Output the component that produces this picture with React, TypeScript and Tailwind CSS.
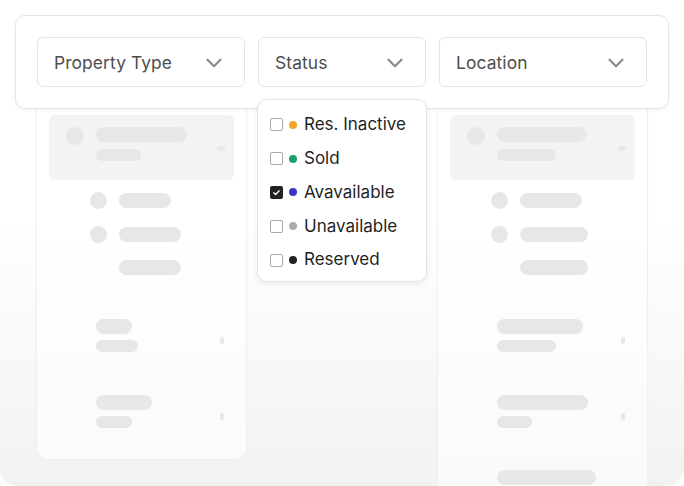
import { ChevronDown } from 'lucide-react'

const font = { fontFamily: 'Inter, "Noto Sans", sans-serif' }

function Select({ label, w }: { label: string; w: string }) {
  return (
    <div className={`${w} h-[50px] flex items-center justify-between pl-[16px] pr-[17px] border border-[#e4e4e4] rounded-[6px] bg-white`}>
      <span className="text-[17.4px] text-[#4e4e4e] tracking-[0.1px] mt-[3px]">{label}</span>
      <ChevronDown size={26} strokeWidth={2} className="text-[#8a8a8a] mt-[1px]" />
    </div>
  )
}

const statuses = [
  { label: 'Res. Inactive', dot: 'bg-[#f5a524]', checked: false },
  { label: 'Sold', dot: 'bg-[#17a068]', checked: false },
  { label: 'Avavailable', dot: 'bg-[#3a33c6]', checked: true },
  { label: 'Unavailable', dot: 'bg-[#acacac]', checked: false },
  { label: 'Reserved', dot: 'bg-[#222222]', checked: false },
]

function Bar({ w, thin }: { w: string; thin?: boolean }) {
  return <div className={`${w} ${thin ? 'h-[12px]' : 'h-[15px]'} rounded-full bg-[#e7e7e7]`} />
}

function Item({ a, b }: { a: string; b: string }) {
  return (
    <div className="flex items-center justify-between pl-[59px] pr-[22px] h-[34px]">
      <div className="flex flex-col gap-[6px]">
        <Bar w={a} />
        <Bar w={b} thin />
      </div>
      <div className="w-[4px] h-[7px] rounded-full bg-[#e7e7e7] mt-[10px]" />
    </div>
  )
}

function Column({ bars, extra, h }: { bars: string[]; extra?: boolean; h: string }) {
  return (
    <div className={`w-[211px] ${h} rounded-b-[12px] bg-white/60 border border-t-0 border-[#f0f0f0] shadow-[0_1px_3px_rgba(0,0,0,0.03)] px-[12px] pt-[6px]`}>
      <div className="h-[65px] rounded-[6px] bg-[#f3f3f3] flex items-start pl-[17px] pr-[9px] pt-[12px]">
        <div className="w-[18px] h-[18px] rounded-full bg-[#e7e7e7] mr-[12px]" />
        <div className="flex flex-col gap-[7px]">
          <Bar w={bars[0]} />
          <Bar w={bars[1]} thin />
        </div>
        <div className="ml-auto mt-[19px] w-[8px] h-[5px] rounded-full bg-[#e7e7e7]" />
      </div>
      <div className="pl-[41px] pt-[12px] flex flex-col gap-[17px]">
        <div className="flex items-center gap-[12px]">
          <div className="w-[17px] h-[17px] rounded-full bg-[#e7e7e7]" />
          <Bar w={bars[2]} />
        </div>
        <div className="flex items-center gap-[12px]">
          <div className="w-[17px] h-[17px] rounded-full bg-[#e7e7e7]" />
          <Bar w={bars[3]} />
        </div>
        <div className="pl-[29px]">
          <Bar w={bars[3]} />
        </div>
      </div>
      <div className="-mx-[12px] mt-[43px] flex flex-col gap-[42px]">
        <Item a={bars[4]} b={bars[5]} />
        <Item a={bars[6]} b={bars[7]} />
        {extra && (
          <div className="pl-[59px]">
            <Bar w="w-[99px]" />
          </div>
        )}
      </div>
    </div>
  )
}

export default function App() {
  return (
    <div style={font} className="w-[684px] h-[486px] relative overflow-hidden rounded-b-[18px] bg-linear-to-b from-white from-45% to-[#f2f2f2]">
      <div className="pt-[15px] px-[15px] relative z-10">
        <div className="w-[654px] h-[94px] flex items-center gap-[13px] px-[21px] bg-white border border-[#e6e6e6] rounded-[10px] shadow-[0_1px_3px_rgba(0,0,0,0.06)]">
          <Select label="Property Type" w="w-[208px]" />
          <Select label="Status" w="w-[168px]" />
          <Select label="Location" w="w-[208px]" />
        </div>
      </div>
      <div className="flex pl-[36px] gap-[190px]">
        <Column h="h-[351px]" bars={['w-[91px]', 'w-[45px]', 'w-[52px]', 'w-[62px]', 'w-[36px]', 'w-[42px]', 'w-[56px]', 'w-[36px]']} />
        <Column h="h-[400px]" extra bars={['w-[89px]', 'w-[59px]', 'w-[62px]', 'w-[68px]', 'w-[86px]', 'w-[59px]', 'w-[91px]', 'w-[35px]']} />
      </div>

      <div className="absolute z-20 left-[257px] top-[99px] w-[170px] h-[183px] bg-white border border-[#e4e4e4] rounded-[10px] shadow-[0_2px_6px_rgba(0,0,0,0.07)] pt-[8px] pl-[12px]">
        {statuses.map(s => (
          <div key={s.label} className="flex items-center h-[33.8px]">
            {s.checked ? (
              <div className="w-[13px] h-[13px] rounded-[2px] bg-[#222] flex items-center justify-center">
                <svg width="9" height="9" viewBox="0 0 10 10" fill="none">
                  <path d="M2 5.2l2 2L8 3" stroke="white" strokeWidth="1.4" strokeLinecap="round" strokeLinejoin="round" />
                </svg>
              </div>
            ) : (
              <div className="w-[13px] h-[13px] rounded-[2px] border border-[#a9a9a9] bg-white" />
            )}
            <div className={`w-[8px] h-[8px] rounded-full ${s.dot} ml-[6px] mr-[7px]`} />
            <span className="text-[17px] text-[#1f1f1f]">{s.label}</span>
          </div>
        ))}
      </div>
    </div>
  )
}
